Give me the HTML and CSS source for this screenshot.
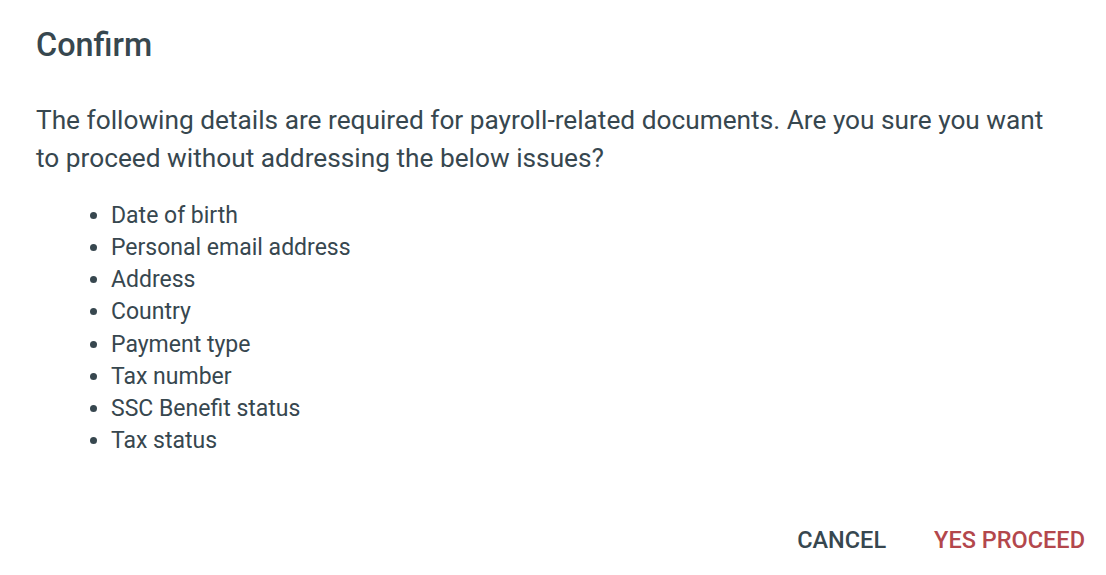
FILE: index.html
```html
<!DOCTYPE html>
<html lang="en">
<head>
<meta charset="utf-8">
<title>Confirm</title>
<link rel="stylesheet" href="styles.css">
</head>
<body>
<div class="dialog">
  <h2 class="title">Confirm</h2>
  <div class="content">
    <p class="message">The following details are required for payroll-related documents. Are you sure you want to proceed without addressing the below issues?</p>
    <ul class="issues">
      <li>Date of birth</li>
      <li>Personal email address</li>
      <li>Address</li>
      <li>Country</li>
      <li>Payment type</li>
      <li>Tax number</li>
      <li>SSC Benefit status</li>
      <li>Tax status</li>
    </ul>
  </div>
  <div class="actions">
    <button class="btn btn-cancel">Cancel</button>
    <button class="btn btn-proceed">Yes proceed</button>
  </div>
</div>
</body>
</html>
```
FILE: styles.css
```css
html, body {
  margin: 0;
  padding: 0;
  background: #ffffff;
}
body {
  font-family: Roboto, "Liberation Sans", sans-serif;
  color: #37474f;
  width: 1106px;
  height: 575px;
  overflow: hidden;
}
.dialog {
  height: 575px;
  display: flex;
  flex-direction: column;
  box-sizing: border-box;
  padding: 0 0 0 36px;
}
.title {
  margin: 0;
  padding-top: 25px;
  font-size: 32.4px;
  font-weight: 500;
  line-height: 40px;
  color: #37474f;
}
.content {
  flex: 1;
  padding-right: 40px;
}
.message {
  margin: 36px 0 0 0;
  font-size: 26.25px;
  line-height: 38px;
}
.issues {
  margin: 23px 0 0 0;
  padding-left: 75px;
  font-size: 23px;
  line-height: 32.15px;
}
.actions {
  display: flex;
  justify-content: flex-end;
  gap: 16px;
  padding: 0 5px 12px 0;
}
.btn {
  background: none;
  border: none;
  font-family: Roboto, "Liberation Sans", sans-serif;
  font-size: 23.5px;
  font-weight: 500;
  text-transform: uppercase;
  padding: 8px 16px;
  line-height: 30px;
  cursor: pointer;
}
.btn-cancel { color: #37474f; }
.btn-proceed { color: #b3474c; }
```
